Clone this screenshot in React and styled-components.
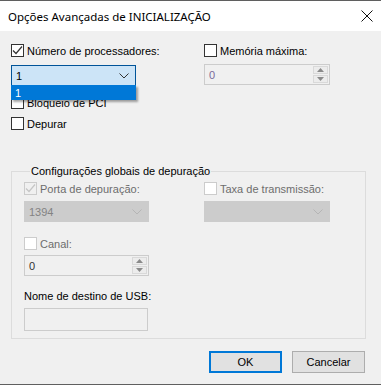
import styled, { createGlobalStyle } from "styled-components";

const GlobalStyle = createGlobalStyle`
  html, body {
    margin: 0;
    padding: 0;
    background: #f0f0f0;
  }
  body {
    font-family: "Liberation Sans", Arial, sans-serif;
    font-size: 11px;
    color: #000;
  }
`;

const Window = styled.div`
  width: 381px;
  height: 385px;
  box-sizing: border-box;
  border-top: 1px solid #5f5f5f;
  border-bottom: 1px solid #5f5f5f;
  background: #f0f0f0;
  display: flex;
  flex-direction: column;
`;

const TitleBar = styled.div`
  height: 30px;
  background: #fff;
  display: flex;
  align-items: center;
  justify-content: space-between;
  padding: 0 8px 0 8px;
  font-family: "Noto Sans", "Open Sans", sans-serif;
  font-size: 11.5px;
`;

const CloseIcon = () => (
  <svg width="12" height="12" viewBox="0 0 12 12">
    <path d="M0.5 0.5 L11.5 11.5 M11.5 0.5 L0.5 11.5" stroke="#111" strokeWidth="1" />
  </svg>
);

const Body = styled.div`
  flex: 1;
  padding: 13px 15px 0 11px;
  display: flex;
  flex-direction: column;
`;

const TopGrid = styled.div`
  display: grid;
  grid-template-columns: 193px 1fr;
`;

const Column = styled.div`
  display: flex;
  flex-direction: column;
  position: relative;
`;

const CheckRow = styled.label`
  display: flex;
  align-items: center;
  gap: 3px;
  height: 13px;
  margin-top: ${({ $mt }) => $mt || 0}px;
  color: ${({ $disabled }) => ($disabled ? "#6d6d6d" : "#000")};
  white-space: nowrap;
`;

const Box = styled.span`
  width: 13px;
  height: 13px;
  box-sizing: border-box;
  border: 1px solid ${({ $disabled }) => ($disabled ? "#cccccc" : "#333333")};
  background: ${({ $disabled, $checked }) => ($disabled && $checked ? "#f0f0f0" : "#fff")};
  display: flex;
  align-items: center;
  justify-content: center;
  flex: none;
`;

const CheckBox = ({ checked, disabled, label, mt }) => (
  <CheckRow $disabled={disabled} $mt={mt}>
    <Box $checked={checked} $disabled={disabled}>
      {checked && (
        <svg width="11" height="11" viewBox="0 0 11 11">
          <path
            d="M1 5.5 L4 8.5 L10 1.5"
            fill="none"
            stroke={disabled ? "#c5c5c5" : "#333"}
            strokeWidth="1.2"
          />
        </svg>
      )}
    </Box>
    {label}
  </CheckRow>
);

const Chevron = ({ color }) => (
  <svg width="10" height="6" viewBox="0 0 10 6">
    <path d="M0.5 0.5 L5 5 L9.5 0.5" fill="none" stroke={color} strokeWidth="1" />
  </svg>
);

const Combo = styled.div`
  width: ${({ $w }) => $w}px;
  height: 21px;
  box-sizing: border-box;
  margin-top: ${({ $mt }) => $mt || 0}px;
  display: flex;
  align-items: center;
  justify-content: space-between;
  padding: 0 6px 0 4px;
  border: 1px solid ${({ $focused, $disabled }) =>
    $focused ? "#005499" : $disabled ? "#cccccc" : "#adadad"};
  background: ${({ $focused, $disabled }) =>
    $focused ? "#cce4f7" : $disabled ? "#cccccc" : "#e1e1e1"};
  color: ${({ $disabled }) => ($disabled ? "#838383" : "#000")};
`;

const DropList = styled.div`
  position: absolute;
  left: 0;
  top: 41px;
  width: 125px;
  height: 15px;
  background: #0078d7;
  color: #fff;
  display: flex;
  align-items: center;
  padding-left: 4px;
  box-sizing: border-box;
  box-shadow: 2px 2px 2px rgba(0, 0, 0, 0.35);
  z-index: 2;
`;

const Spin = styled.div`
  width: ${({ $w }) => $w}px;
  height: 21px;
  box-sizing: border-box;
  margin-top: ${({ $mt }) => $mt || 0}px;
  border: 1px solid #cccccc;
  background: #f0f0f0;
  display: flex;
  align-items: stretch;
`;

const SpinValue = styled.div`
  flex: 1;
  display: flex;
  align-items: center;
  padding-left: 4px;
  color: ${({ $color }) => $color};
`;

const SpinButtons = styled.div`
  width: 17px;
  display: flex;
  flex-direction: column;
  gap: 1px;
  padding: 1px;
  box-sizing: border-box;
`;

const SpinButton = styled.div`
  flex: 1;
  border: 1px solid #d9d9d9;
  background: #ececec;
  display: flex;
  align-items: center;
  justify-content: center;
`;

const Arrow = ({ up }) => (
  <svg width="7" height="4" viewBox="0 0 7 4">
    <path d={up ? "M0 4 L3.5 0 L7 4 Z" : "M0 0 L3.5 4 L7 0 Z"} fill="#8a8a8a" />
  </svg>
);

const SpinBox = ({ value, w, mt, color }) => (
  <Spin $w={w} $mt={mt}>
    <SpinValue $color={color}>{value}</SpinValue>
    <SpinButtons>
      <SpinButton>
        <Arrow up />
      </SpinButton>
      <SpinButton>
        <Arrow />
      </SpinButton>
    </SpinButtons>
  </Spin>
);

const Group = styled.fieldset`
  margin: 35px 0 0 0;
  padding: 4px 12px 7px 12px;
  border: 1px solid #dcdcdc;
  min-width: 0;
`;

const Legend = styled.legend`
  padding: 0 1px;
  margin-left: 6px;
  color: #000;
  line-height: 13px;
`;

const GroupGrid = styled.div`
  display: grid;
  grid-template-columns: 180px 1fr;
`;

const Label = styled.div`
  margin-top: ${({ $mt }) => $mt || 0}px;
  color: #000;
  height: 14px;
  display: flex;
  align-items: center;
`;

const TextBox = styled.div`
  width: 124px;
  height: 23px;
  box-sizing: border-box;
  margin-top: 5px;
  border: 1px solid #cccccc;
  background: #f0f0f0;
`;

const ButtonRow = styled.div`
  display: flex;
  justify-content: flex-end;
  gap: 10px;
  margin-top: 12px;
  padding-right: 1px;
`;

const Button = styled.button`
  width: 73px;
  height: 22px;
  box-sizing: border-box;
  font: inherit;
  color: #000;
  background: #e1e1e1;
  border: ${({ $default }) => ($default ? "2px solid #0078d7" : "1px solid #adadad")};
  padding: 0;
`;

export default function App() {
  return (
    <>
      <GlobalStyle />
      <Window>
        <TitleBar>
          <span>Opções Avançadas de INICIALIZAÇÃO</span>
          <CloseIcon />
        </TitleBar>
        <Body>
          <TopGrid>
            <Column>
              <CheckBox checked label="Número de processadores:" />
              <Combo $w={125} $mt={8} $focused>
                <span>1</span>
                <Chevron color="#333" />
              </Combo>
              <DropList>1</DropList>
              <CheckBox label="Bloqueio de PCI" mt={10} />
              <CheckBox label="Depurar" mt={8} />
            </Column>
            <Column>
              <CheckBox label="Memória máxima:" />
              <SpinBox value="0" w={126} mt={7} color="#7a6a9a" />
            </Column>
          </TopGrid>
          <Group>
            <Legend>Configurações globais de depuração</Legend>
            <GroupGrid>
              <Column>
                <CheckBox checked disabled label="Porta de depuração:" />
                <Combo $w={125} $mt={6} $disabled>
                  <span>1394</span>
                  <Chevron color="#b5b5b5" />
                </Combo>
                <CheckBox disabled label="Canal:" mt={15} />
                <SpinBox value="0" w={125} mt={5} color="#333" />
                <Label $mt={13}>Nome de destino de USB:</Label>
                <TextBox />
              </Column>
              <Column>
                <CheckBox disabled label="Taxa de transmissão:" />
                <Combo $w={126} $mt={6} $disabled>
                  <span></span>
                  <Chevron color="#b5b5b5" />
                </Combo>
              </Column>
            </GroupGrid>
          </Group>
          <ButtonRow>
            <Button $default>OK</Button>
            <Button>Cancelar</Button>
          </ButtonRow>
        </Body>
      </Window>
    </>
  );
}
